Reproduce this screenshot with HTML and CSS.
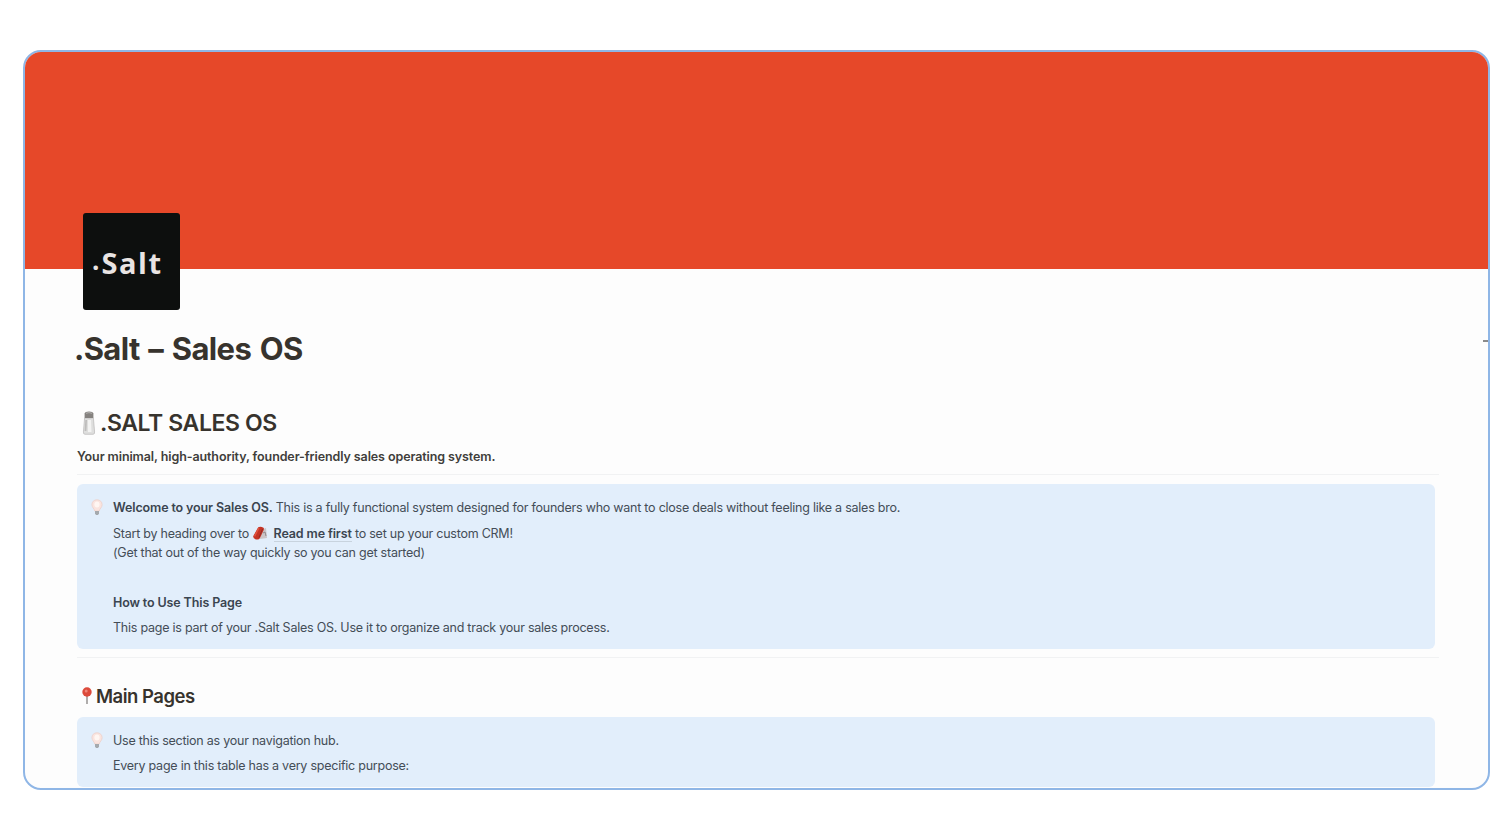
FILE: index.html
```html
<!DOCTYPE html>
<html lang="en">

<head>
  <meta charset="UTF-8">
  <meta name="viewport" content="width=device-width, initial-scale=1.0">
  <title>.Salt – Sales OS</title>
  <link rel="stylesheet" href="styles.css">
</head>

<body>
  <div class="frame">
    <div class="cover"></div>
    <span class="outline-mark"></span>

    <main class="page">
      <div class="logo"><span class="logo-dot">.</span>Salt</div>
      <h1>.Salt – Sales OS</h1>

      <h2>
        <svg class="shaker" viewBox="0 0 14 24" width="14" height="24">
          <path d="M2.6 7 L1.4 21 Q1.2 23.3 3 23.3 H11 Q12.8 23.3 12.6 21 L11.4 7 Z" fill="#dededd" stroke="#b9b8b7" stroke-width=".7" />
          <path d="M3.3 9 L2.6 20 H4.4 L5 9 Z" fill="#bdbcbb" />
          <path d="M6 9 H9 L9.5 21 H6 Z" fill="#f3f3f2" />
          <path d="M2.6 7 V2.6 Q3 .6 7 .6 Q11 .6 11.4 2.6 V7 Z" fill="#85827f" />
          <path d="M4 2.3 Q7 .9 10 2.3" fill="none" stroke="#b4b2b0" stroke-width="1" />
        </svg>
        <span>.SALT SALES OS</span>
      </h2>
      <p class="tagline">Your minimal, high-authority, founder-friendly sales operating system.</p>
      <hr>

      <section class="callout welcome">
        <svg class="bulb" viewBox="0 0 12 17" width="12" height="17">
          <path d="M6 .8 C2.8 .8 .9 3 .9 5.7 C.9 8.3 3.4 9.7 3.7 12 H8.3 C8.6 9.7 11.1 8.3 11.1 5.7 C11.1 3 9.2 .8 6 .8 Z" fill="#fae4df" stroke="#ecd0ca" stroke-width=".8" />
          <ellipse cx="6" cy="5.5" rx="2.6" ry="3" fill="#fff6f2" />
          <path d="M4 12 H8 V14.5 L7 16 H5 L4 14.5 Z" fill="#a5a9ad" />
        </svg>
        <div class="callout-text">
          <p class="intro"><strong>Welcome to your Sales OS.</strong> This is a fully functional system designed for founders who want to close deals without feeling like a sales bro.</p>
          <p class="start">Start by heading over to
            <svg class="firecracker" viewBox="0 0 16 14" width="16" height="14">
              <path d="M9 4 L14 2 L15 12 L8 13 Z" fill="#cbc5c7" />
              <path d="M11 7 L13 6 L14 10" fill="none" stroke="#92888b" stroke-width="1" />
              <path d="M6.2 1.3 Q8.5 -.2 11.5 1.8 Q12.3 2.5 11.7 4 L8 12 Q7 14.2 4 13.4 Q.6 12.3 1.3 10 Z" fill="#c53425" />
              <path d="M6.8 2.2 L2.5 10.3" fill="none" stroke="#e25440" stroke-width="1.4" />
              <path d="M10.5 3 L7 11.5" fill="none" stroke="#8d2b26" stroke-width="1" />
            </svg>
            <a class="page-link">Read me first</a> to set up your custom CRM!<br>
            (Get that out of the way quickly so you can get started)</p>
          <p class="how"><strong>How to Use This Page</strong></p>
          <p class="about">This page is part of your .Salt Sales OS. Use it to organize and track your sales process.</p>
        </div>
      </section>
      <hr>

      <h3>
        <svg class="pin" viewBox="0 0 10 18" width="10" height="18">
          <path d="M5 8 V17" stroke="#8e8a89" stroke-width="1.4" />
          <circle cx="5" cy="5" r="4.7" fill="#dc4a3b" />
          <circle cx="4.2" cy="4" r="1.5" fill="#ef8578" />
        </svg>
        <span>Main Pages</span>
      </h3>
      <section class="callout hub">
        <svg class="bulb" viewBox="0 0 12 17" width="12" height="17">
          <path d="M6 .8 C2.8 .8 .9 3 .9 5.7 C.9 8.3 3.4 9.7 3.7 12 H8.3 C8.6 9.7 11.1 8.3 11.1 5.7 C11.1 3 9.2 .8 6 .8 Z" fill="#fae4df" stroke="#ecd0ca" stroke-width=".8" />
          <ellipse cx="6" cy="5.5" rx="2.6" ry="3" fill="#fff6f2" />
          <path d="M4 12 H8 V14.5 L7 16 H5 L4 14.5 Z" fill="#a5a9ad" />
        </svg>
        <div class="callout-text">
          <p class="nav-hub">Use this section as your navigation hub.</p>
          <p class="purpose">Every page in this table has a very specific purpose:</p>
        </div>
      </section>
    </main>
  </div>
</body>

</html>
```
FILE: styles.css
```css
/* General Reset */
* {
  box-sizing: border-box;
}

body {
  margin: 0;
  padding: 50px 22px 50px 23px;
  height: 840px;
  background: #fff;
  font-family: 'Inter', sans-serif;
  overflow: hidden;
}

h1,
h2,
h3,
p {
  margin: 0;
}

/* Window */
.frame {
  position: relative;
  height: 740px;
  border: 2px solid #8fb6e6;
  border-radius: 18px;
  background: #fdfdfd;
  overflow: hidden;
}

.cover {
  height: 217px;
  background: #e64829;
}

/* Collapsed outline marker on the right edge */
.outline-mark {
  position: absolute;
  top: 288px;
  right: 0;
  width: 5px;
  height: 2px;
  background: #8a8a8a;
}

.page {
  padding: 0 49px 0 52px;
  color: #37332d;
}

.logo {
  position: relative;
  display: flex;
  align-items: center;
  width: 97px;
  height: 97px;
  margin: -56px 0 0 6px;
  padding: 1px 0 0 9px;
  border-radius: 3px;
  background: #0d0f0e;
  color: #e9e4e3;
  font-family: 'Open Sans', sans-serif;
  font-size: 29px;
  font-weight: 700;
  letter-spacing: 1.6px;
}

.logo-dot {
  margin: -4px 2px 0 0;
  font-size: 26px;
  letter-spacing: 0;
}

h1 {
  margin: 19px 0 0 -3px;
  font-size: 31px;
  line-height: 40px;
  font-weight: 700;
  letter-spacing: -0.65px;
  word-spacing: 2px;
}

h2 {
  display: flex;
  align-items: center;
  gap: 4px;
  margin-top: 38px;
  padding-left: 5px;
  font-size: 23px;
  line-height: 32px;
  font-weight: 600;
  letter-spacing: -0.4px;
}

.tagline {
  margin-top: 8px;
  color: #403e3b;
  font-size: 12.5px;
  line-height: 20px;
  font-weight: 600;
  letter-spacing: -0.1px;
}

hr {
  height: 1px;
  margin: 7px 0 9px;
  border: 0;
  background: #f1f2f3;
}

/* Callouts */
.callout {
  display: flex;
  gap: 10px;
  width: 1358px;
  padding: 0 14px;
  border-radius: 6px;
  background: #e2eefb;
  color: #444d57;
  font-size: 12.5px;
  line-height: 19px;
  letter-spacing: -0.24px;
}

.callout strong,
.page-link {
  font-weight: 600;
  letter-spacing: -0.13px;
  color: #3b4550;
}

.bulb {
  margin-top: 15px;
}

.welcome {
  height: 165px;
}

.intro {
  margin-top: 14px;
}

.start {
  margin-top: 7px;
}

.firecracker {
  margin-right: 2px;
  vertical-align: -2px;
}

.page-link {
  border-bottom: 1px solid #c8d3de;
}

.how {
  margin-top: 31px;
}

.about {
  margin-top: 6px;
}

.welcome + hr {
  margin: 8px 0 25px;
}

h3 {
  display: flex;
  align-items: center;
  gap: 4px;
  padding-left: 5px;
  font-size: 18.5px;
  line-height: 26px;
  font-weight: 600;
  letter-spacing: -0.5px;
}

.hub {
  height: 70px;
  margin-top: 8px;
}

.nav-hub {
  margin-top: 14px;
}

.purpose {
  margin-top: 6px;
}
```
